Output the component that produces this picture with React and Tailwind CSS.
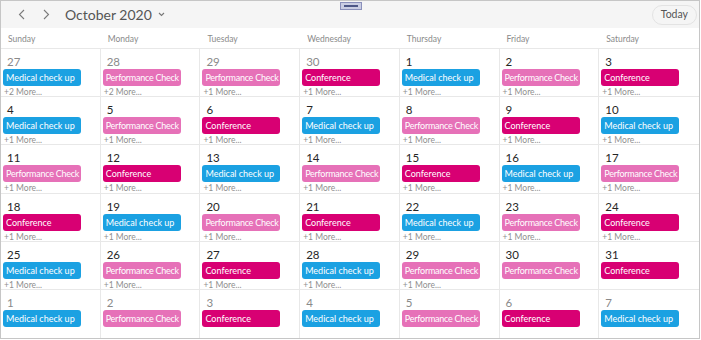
import React from 'react';

const DAYS = ['Sunday', 'Monday', 'Tuesday', 'Wednesday', 'Thursday', 'Friday', 'Saturday'];

const EVENT_STYLES = {
  M: { label: 'Medical check up', cls: 'bg-[#1ba1e2]' },
  P: { label: 'Performance Check', cls: 'bg-[#e671b8] tracking-[-0.25px]' },
  C: { label: 'Conference', cls: 'bg-[#d80073]' },
};

// date, other month?, event type, more count
const WEEKS = [
  [[27, 1, 'M', 2], [28, 1, 'P', 2], [29, 1, 'P', 1], [30, 1, 'C', 1], [1, 0, 'M', 1], [2, 0, 'P', 1], [3, 0, 'C', 1]],
  [[4, 0, 'M', 1], [5, 0, 'P', 1], [6, 0, 'C', 1], [7, 0, 'M', 1], [8, 0, 'P', 1], [9, 0, 'C', 1], [10, 0, 'M', 1]],
  [[11, 0, 'P', 1], [12, 0, 'C', 1], [13, 0, 'M', 1], [14, 0, 'P', 1], [15, 0, 'C', 1], [16, 0, 'M', 1], [17, 0, 'P', 1]],
  [[18, 0, 'C', 1], [19, 0, 'M', 1], [20, 0, 'P', 1], [21, 0, 'C', 1], [22, 0, 'M', 1], [23, 0, 'P', 1], [24, 0, 'C', 1]],
  [[25, 0, 'M', 1], [26, 0, 'P', 1], [27, 0, 'C', 1], [28, 0, 'M', 1], [29, 0, 'P', 1], [30, 0, 'P', 0], [31, 0, 'C', 0]],
  [[1, 1, 'M', 0], [2, 1, 'P', 0], [3, 1, 'C', 0], [4, 1, 'M', 0], [5, 1, 'P', 0], [6, 1, 'C', 0], [7, 1, 'M', 0]],
];

const Chevron = ({ dir }) => (
  <svg width="8" height="11" viewBox="0 0 8 11" fill="none" stroke="#7a7a7a" strokeWidth="1.1">
    {dir === 'left' ? <path d="M6 1L1.5 5.5 6 10" /> : <path d="M2 1l4.5 4.5L2 10" />}
  </svg>
);

const Cell = ({ day, last }) => {
  const [date, other, type, more] = day;
  const ev = EVENT_STYLES[type];
  return (
    <div className={`h-full overflow-hidden ${last ? '' : 'border-r border-[#e8e8e8]'}`}>
      <div className={`pl-[6px] pt-[7px] text-[11.5px] leading-[11px] ${other ? 'text-[#8a8a8a]' : 'text-[#262626]'}`}>
        {date}
      </div>
      <div className={`mx-[2px] mt-[2px] w-[78px] h-[17px] rounded-[3px] ${ev.cls} text-white text-[9px] leading-[17px] pl-[3px] whitespace-nowrap overflow-hidden`}>
        {ev.label}
      </div>
      {more > 0 && (
        <div className="pl-[3px] text-[8.5px] leading-[12px] text-[#8f8f8f]">+{more} More...</div>
      )}
    </div>
  );
};

export default function App() {
  return (
    <div className="w-[700px] h-[339px] border border-[#c6c6c6] bg-white flex flex-col overflow-hidden relative" style={{ fontFamily: 'Lato, "Open Sans", sans-serif' }}>
      {/* window handle */}
      <div className="absolute left-[339px] top-[1px] w-[22px] h-[8px] bg-[#c9cde3] border border-[#8a90bb] flex items-center justify-center">
        <div className="w-[14px] h-[2px] bg-[#4c5686]" />
      </div>
      <div className="h-[27px] bg-[#f5f5f5] flex items-center shrink-0">
        <div className="ml-[16px] w-[10px] flex justify-center"><Chevron dir="left" /></div>
        <div className="ml-[14px] w-[10px] flex justify-center"><Chevron dir="right" /></div>
        <div className="ml-[14px] text-[14px] text-[#555] leading-none">October 2020</div>
        <svg className="ml-[6px]" width="7" height="5" viewBox="0 0 7 5" fill="none" stroke="#777" strokeWidth="1.1">
          <path d="M1 1l2.5 2.5L6 1" />
        </svg>
        <div className="ml-auto mr-[2px] h-[20px] px-[8px] rounded-full border border-[#e3e3e3] text-[10.5px] text-[#555] flex items-center">
          Today
        </div>
      </div>
      <div className="h-[21px] grid grid-cols-7 border-b border-[#e8e8e8] shrink-0">
        {DAYS.map((d) => (
          <div key={d} className="pl-[7px] pt-[2px] text-[8.5px] leading-[19px] text-[#8a8a8a]">{d}</div>
        ))}
      </div>
      <div className="flex-1 min-h-0 grid grid-rows-[repeat(6,minmax(0,1fr))]">
        {WEEKS.map((week, i) => (
          <div key={i} className={`min-h-0 grid grid-cols-7 ${i < 5 ? 'border-b border-[#e8e8e8]' : ''}`}>
            {week.map((day, j) => (
              <Cell key={j} day={day} last={j === 6} />
            ))}
          </div>
        ))}
      </div>
    </div>
  );
}
